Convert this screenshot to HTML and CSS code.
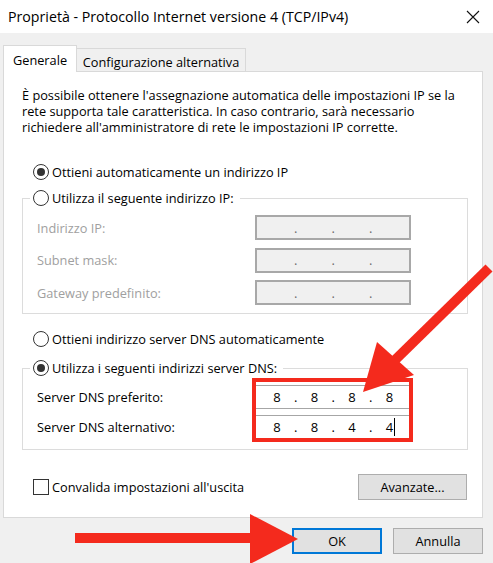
FILE: index.html
```html
<!DOCTYPE html>
<html lang="it">
<head>
    <meta charset="UTF-8">
    <title>Proprietà - Protocollo Internet versione 4 (TCP/IPv4)</title>
    <link rel="stylesheet" href="styles.css">
</head>
<body>
    <div class="window">
        <!-- Title bar -->
        <div class="titlebar">
            <span class="title">Proprietà - Protocollo Internet versione 4 (TCP/IPv4)</span>
            <svg class="close" width="14" height="14" viewBox="0 0 14 14">
                <path d="M1 1 L13 13 M13 1 L1 13" stroke="#111" stroke-width="1.1" fill="none"/>
            </svg>
        </div>

        <div class="tabs">
            <div class="tab active">Generale</div>
            <div class="tab">Configurazione alternativa</div>
        </div>

        <div class="panel">
            <p class="intro">È possibile ottenere l'assegnazione automatica delle impostazioni IP se la rete supporta tale caratteristica. In caso contrario, sarà necessario richiedere all'amministratore di rete le impostazioni IP corrette.</p>

            <div class="option ip-auto"><span class="radio checked"></span>Ottieni automaticamente un indirizzo IP</div>

            <fieldset class="group ip-group">
                <legend class="option"><span class="radio"></span>Utilizza il seguente indirizzo IP:</legend>
                <div class="field disabled">
                    <span class="label">Indirizzo IP:</span>
                    <div class="ip"><span class="octet"></span><span class="dot">.</span><span class="octet"></span><span class="dot">.</span><span class="octet"></span><span class="dot">.</span><span class="octet"></span></div>
                </div>
                <div class="field disabled">
                    <span class="label">Subnet mask:</span>
                    <div class="ip"><span class="octet"></span><span class="dot">.</span><span class="octet"></span><span class="dot">.</span><span class="octet"></span><span class="dot">.</span><span class="octet"></span></div>
                </div>
                <div class="field disabled">
                    <span class="label">Gateway predefinito:</span>
                    <div class="ip"><span class="octet"></span><span class="dot">.</span><span class="octet"></span><span class="dot">.</span><span class="octet"></span><span class="dot">.</span><span class="octet"></span></div>
                </div>
            </fieldset>

            <div class="option dns-auto"><span class="radio"></span>Ottieni indirizzo server DNS automaticamente</div>

            <fieldset class="group dns-group">
                <legend class="option"><span class="radio checked"></span>Utilizza i seguenti indirizzi server DNS:</legend>
                <div class="field">
                    <span class="label">Server DNS preferito:</span>
                    <div class="ip"><span class="octet">8</span><span class="dot">.</span><span class="octet">8</span><span class="dot">.</span><span class="octet">8</span><span class="dot">.</span><span class="octet">8</span></div>
                </div>
                <div class="field">
                    <span class="label">Server DNS alternativo:</span>
                    <div class="ip"><span class="octet">8</span><span class="dot">.</span><span class="octet">8</span><span class="dot">.</span><span class="octet">4</span><span class="dot">.</span><span class="octet caret">4</span></div>
                </div>
            </fieldset>

            <div class="footer-row">
                <div class="option validate"><span class="check"></span>Convalida impostazioni all'uscita</div>
                <button class="btn advanced">Avanzate...</button>
            </div>
        </div>

        <div class="actions">
            <button class="btn default">OK</button>
            <button class="btn">Annulla</button>
        </div>

        <!-- Red annotations drawn over the dialog -->
        <svg class="annotations" width="493" height="563" viewBox="0 0 493 563">
            <rect x="254" y="380" width="157" height="60" fill="none" stroke="#f42a1d" stroke-width="4"/>
            <line x1="489" y1="268" x2="393" y2="362" stroke="#f42a1d" stroke-width="10"/>
            <polygon points="363,392 377,342 414,375" fill="#f42a1d"/>
            <line x1="75" y1="538" x2="252" y2="538" stroke="#f42a1d" stroke-width="10"/>
            <polygon points="250,514 298,539 250,564" fill="#f42a1d"/>
        </svg>
    </div>
</body>
</html>
```

FILE: styles.css
```css
* {
    box-sizing: border-box;
}

body {
    margin: 0;
    font-family: "Open Sans", sans-serif;
    font-size: 12.75px;
    color: #000;
}

.window {
    position: relative;
    width: 493px;
    height: 563px;
    background-color: #f0f0f0;
    overflow: hidden;
}

.titlebar {
    height: 33px;
    background-color: #ffffff;
    display: flex;
    align-items: center;
    justify-content: space-between;
    padding: 0 13px 0 8px;
}

.title {
    font-size: 14.2px;
    line-height: 16px;
}

.tabs {
    display: flex;
    align-items: flex-end;
    padding: 12px 0 0 3px;
}

.tab {
    border: 1px solid #d9d9d9;
    border-bottom: none;
    text-align: center;
    line-height: 16px;
    white-space: nowrap;
}

.tab.active {
    position: relative;
    width: 74px;
    height: 27px;
    margin-bottom: -1px;
    padding-top: 6px;
    background-color: #ffffff;
}

.tab:not(.active) {
    width: 169px;
    height: 23px;
    padding-top: 5px;
    border-left: none;
}

.panel {
    margin-left: 3px;
    width: 480px;
    background-color: #ffffff;
    border: 1px solid #d9d9d9;
    padding: 15px 15px 17px 18px;
}

.intro {
    margin: 0;
    line-height: 16px;
}

.option {
    display: flex;
    align-items: center;
    gap: 3px;
    line-height: 16px;
    white-space: nowrap;
}

.radio, .check {
    flex: none;
    width: 16px;
    height: 16px;
    border: 1px solid #333;
    background-color: #fff;
}

.radio {
    border-radius: 50%;
    display: grid;
    place-items: center;
}

.radio.checked::after {
    content: "";
    width: 8px;
    height: 8px;
    border-radius: 50%;
    background-color: #333;
}

.ip-auto {
    margin: 29px 0 0 11px;
}

.dns-auto {
    margin: 17px 0 0 11px;
}

.group {
    width: 446px;
    margin: 10px 0 0 0;
    min-width: 0;
    border: 1px solid #dcdcdc;
    padding: 9px 0 8px 0;
}

.dns-group {
    margin-top: 13px;
    padding-bottom: 10px;
}

.group legend {
    margin-left: 7px;
    padding: 0 6px 0 3px;
}

.field {
    display: flex;
    align-items: center;
    height: 25px;
    padding-left: 14px;
}

.field + .field {
    margin-top: 7.5px;
}

.dns-group .field {
    height: 24px;
}

.dns-group .field + .field {
    margin-top: 6px;
}

.label {
    flex: none;
    width: 218px;
    white-space: nowrap;
}

.field.disabled .label {
    color: #a0a0a0;
}

.ip {
    width: 156px;
    height: 100%;
    display: flex;
    align-items: center;
    padding-left: 6px;
    border: 1px solid #a6a6a6;
    background-color: #ffffff;
    font-size: 13px;
}

.field.disabled .ip {
    background-color: #f0f0f0;
    border: 2px solid #a8a8a8;
    padding-left: 5px;
    color: #6d6d6d;
}

.octet {
    position: relative;
    width: 30px;
    text-align: center;
}

.dot {
    width: 7.5px;
    text-align: center;
}

.octet.caret::after {
    content: "";
    position: absolute;
    left: 19px;
    top: 0;
    width: 1px;
    height: 18px;
    background-color: #000;
}

.footer-row {
    display: flex;
    align-items: center;
    justify-content: space-between;
    margin-top: 24px;
    width: 446px;
}

.validate {
    margin-left: 11px;
}

.btn {
    font-family: "Open Sans", sans-serif;
    font-size: 12.75px;
    color: #000;
    height: 26px;
    width: 90px;
    padding: 0;
    background-color: #e1e1e1;
    border: 1px solid #adadad;
}

.advanced {
    width: 109px;
    margin-right: 1px;
}

.actions {
    display: flex;
    justify-content: flex-end;
    gap: 11px;
    margin-top: 10px;
    padding-right: 10px;
}

.btn.default {
    border: 2px solid #0078d7;
}

.annotations {
    position: absolute;
    top: 0;
    left: 0;
    pointer-events: none;
}
```
